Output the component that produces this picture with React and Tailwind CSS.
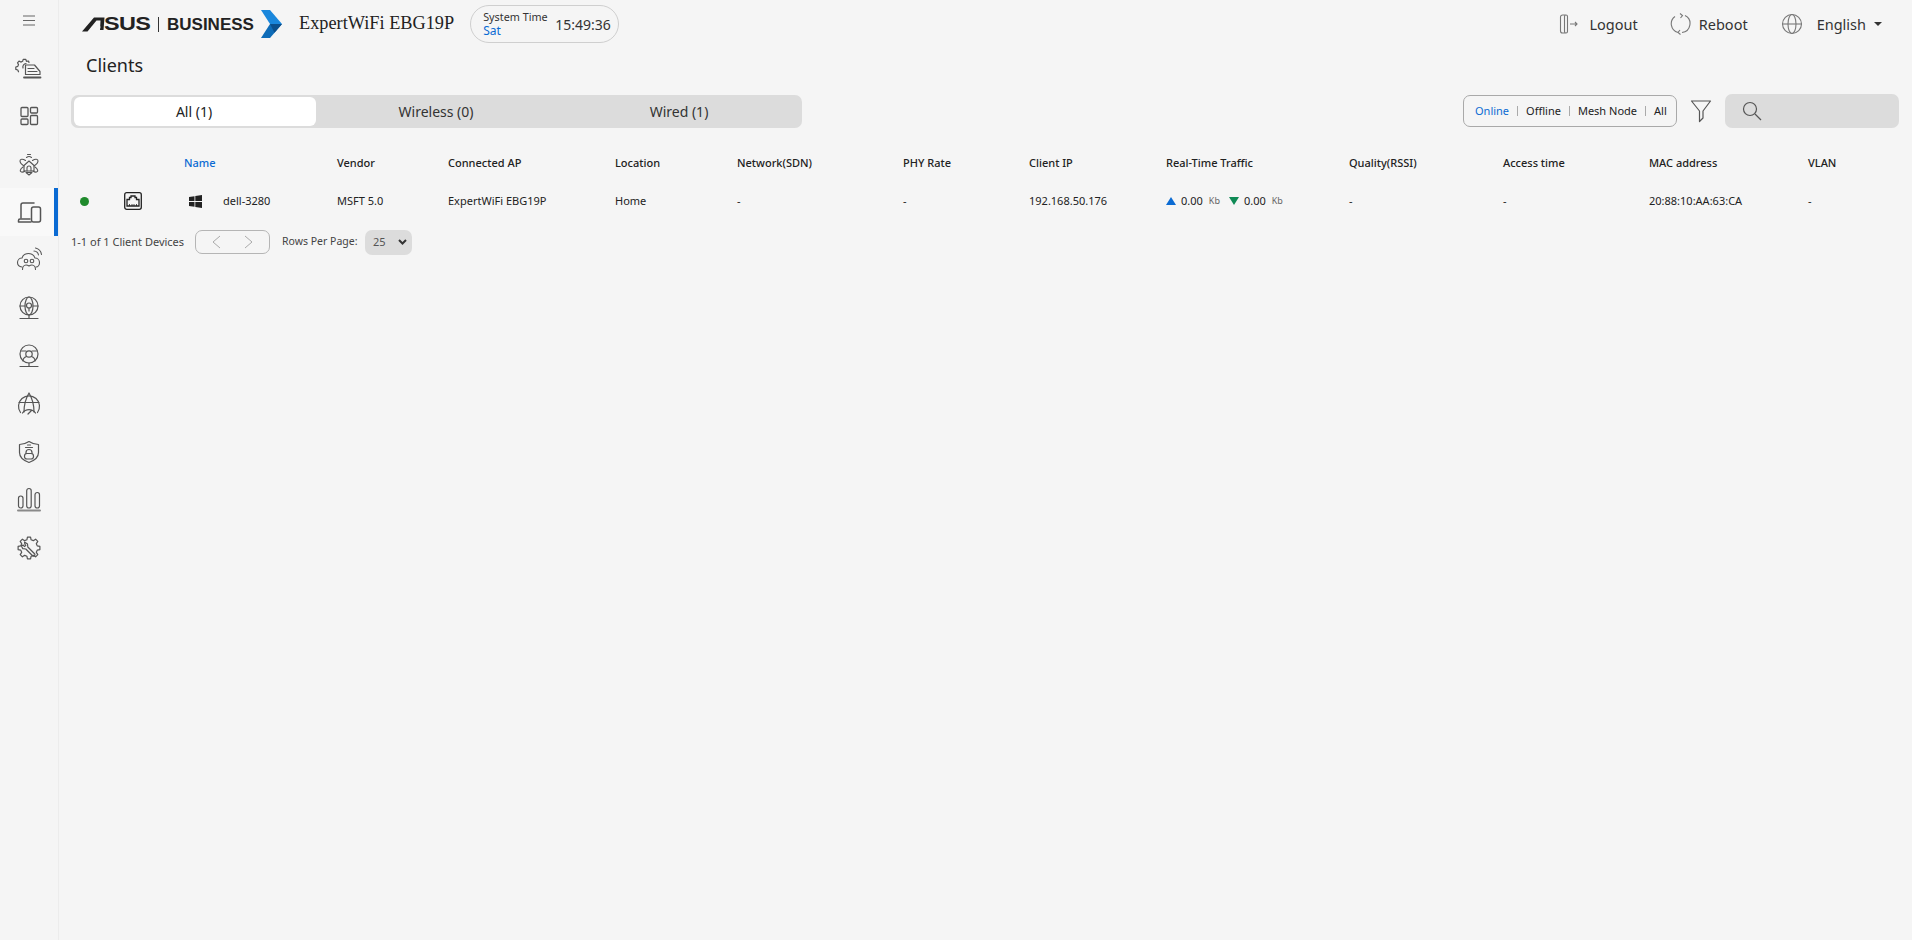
import React from 'react';

const font = { fontFamily: '"Noto Sans", sans-serif' };

const columns = [
  'Name', 'Vendor', 'Connected AP', 'Location', 'Network(SDN)', 'PHY Rate', 'Client IP',
  'Real-Time Traffic', 'Quality(RSSI)', 'Access time', 'MAC address', 'VLAN',
];

const gridCols = 'grid grid-cols-[21px_44px_60px_153px_111px_167px_122px_166px_126px_137px_183px_154px_146px_159px_1fr]';

function Icon({ children, w = 28, h = 28, box = '0 0 28 28', sw = 1.2 }) {
  return (
    <svg width={w} height={h} viewBox={box} fill="none" stroke="#555" strokeWidth={sw} strokeLinecap="round" strokeLinejoin="round">
      {children}
    </svg>
  );
}

// outline of a toothed gear, used by the settings icon
function gearPath(cx, cy, outer, inner, teeth) {
  const pts = [];
  const step = (Math.PI * 2) / teeth;
  for (let i = 0; i < teeth; i++) {
    const a = i * step;
    [[-0.32, inner], [-0.18, outer], [0.18, outer], [0.32, inner]].forEach(([f, r]) => {
      pts.push(`${(cx + r * Math.cos(a + f * step)).toFixed(2)} ${(cy + r * Math.sin(a + f * step)).toFixed(2)}`);
    });
  }
  return `M${pts.join('L')}Z`;
}

const navIcons = [
  <Icon key="a">
    <path d="M14 8.500l-.5-1.500-2 .3-.8-2h-2.500l-.6 2-1.800.8-1.800-1-1.500 1.700 1 1.800-.7 1.800-2 .6v2.400l2 .6.7 1.800" />
    <path d="M8 14a3.500 3.500 0 0 1 3-4.500" />
    <path d="M10.500 11h9l5.500 6.500v3H10.500z" />
    <path d="M13 14.500h6M13 17.500h9" />
    <path d="M9 23.500h16.500" strokeWidth="1.800" />
  </Icon>,
  <Icon key="b" sw={1.300}>
    <rect x="6" y="5.500" width="7" height="9" rx="1" />
    <rect x="15.500" y="5.500" width="7" height="5.500" rx="1" />
    <rect x="6" y="17" width="7" height="5.500" rx="1" />
    <rect x="15.500" y="13.500" width="7" height="9" rx="1" />
  </Icon>,
  <Icon key="c" sw={1.100}>
    <path d="M14 11l5 4.500V21H9v-5.500z" />
    <path d="M12 21v-3a2 2 0 0 1 4 0v3" />
    <path d="M10.500 10.500C7.500 8.500 5 9 5 11c0 2 2.500 4 4 5M17.500 10.500c3-2 5.500-1.500 5.500.5 0 2-2.500 4-4 5" />
    <path d="M8 17c-3 2-3.500 4.500-1.500 5 1 .3 2.500-.3 3.500-1M20 17c3 2 3.500 4.500 1.500 5-1 .3-2.500-.3-3.500-1M14 25l-3-2.500h6z" />
    <path d="M11.500 7.500a4 4 0 0 1 5 0M12.500 4.500h3" />
  </Icon>,
  <Icon key="d" sw={1.500}>
    <path d="M6 20V7a2 2 0 0 1 2-2h11" />
    <path d="M3.500 24h12.500M3.500 24v-1.500a1.500 1.500 0 0 1 1.500-1.500h10" />
    <rect x="16.500" y="9" width="9" height="15" rx="2" />
  </Icon>,
  <Icon key="e" sw={1.100}>
    <path d="M7 21c-3 0-4.500-2-4.500-4.500S4.500 12 7 12c1-3 3.500-4.500 6.500-4.500S19 9.500 20 12c2.500 0 4.500 2 4.500 4.500S23 21 21 21" />
    <circle cx="11" cy="15" r="1.800" /><circle cx="17" cy="15" r="1.800" />
    <path d="M7.500 23.500c0-2.500 1.500-4.500 3.500-4.500 1.500 0 3 1 3 1s1.500-1 3-1c2 0 3.500 2 3.500 4.500" />
    <path d="M19 5a5 5 0 0 1 4.500 4M20.500 2a8 8 0 0 1 6 6.500" />
  </Icon>,
  <Icon key="f">
    <circle cx="14" cy="12" r="9" /><ellipse cx="14" cy="12" rx="4" ry="9" />
    <path d="M5 12h5M18 12h5M14 21v3M5 24.500h18" />
    <circle cx="14" cy="11.500" r="2.500" fill="#f5f5f5" /><path d="M14 14v3" />
  </Icon>,
  <Icon key="g">
    <circle cx="14" cy="12" r="9" /><circle cx="14" cy="12" r="3.200" />
    <path d="M6 9h5M17 9h5M8 19c0-3 2-4 3.500-4.500M20 19c0-3-2-4-3.500-4.500M14 21v3M5 24.500h18" />
  </Icon>,
  <Icon key="h">
    <path d="M5.500 22.500a10.500 10.500 0 1 1 17 0" /><path d="M9 22C9 14 11 8 14 3c3 5 5 11 5 19" />
    <path d="M4 12.500h20M7.500 23a8 8 0 0 1 13 0M13 24l3.500-3.500" />
  </Icon>,
  <Icon key="i">
    <path d="M14 3.500c3 2 6 3 9.500 3v8c0 5-4 8-9.500 10-5.500-2-9.500-5-9.500-10v-8c3.500 0 6.500-1 9.500-3z" />
    <path d="M10.500 9.500h7M12.500 7h3" />
    <path d="M11 15.500v-1a3 3 0 0 1 6 0v1" />
    <rect x="9.500" y="15.500" width="9" height="5.500" rx="2.500" />
  </Icon>,
  <Icon key="j" w={30} h={30} box="0 0 30 30">
    <rect x="4.500" y="11" width="4.500" height="12" rx="2.200" />
    <rect x="12.700" y="3.500" width="4.500" height="19.500" rx="2.200" />
    <rect x="21" y="7.500" width="4.500" height="15.500" rx="2.200" />
    <path d="M4 25.500h22" strokeWidth="2" stroke="#8a8a8a" />
  </Icon>,
  <Icon key="k" sw={1.200}>
    <path d={gearPath(14, 14, 11, 8.500, 8)} />
    <path d="M9.500 8l3 2 .3 3 7 7a1.500 1.500 0 0 1-2 2l-7-7-3-.3-1.500-3 2-.5 1 1.300 1.500-1-1-1.500z" />
  </Icon>,
];

function Sidebar() {
  return (
    <aside className="w-[59px] shrink-0 border-r border-[#ececec] flex flex-col">
      <div className="h-[44px] flex justify-center pr-[1px] pt-[15px]">
        <svg width="12" height="11" viewBox="0 0 12 11" stroke="#666" strokeWidth="1.200">
          <path d="M0 1h12M0 5.500h12M0 10h12" />
        </svg>
      </div>
      <div className="flex flex-col">
        {navIcons.map((icon, i) => (
          <div
            key={i}
            className={`h-[48px] flex items-center justify-center ${i === 3 ? 'bg-[#f9f9f9] border-r-4 border-[#0b6bd3] pl-[4px]' : 'pr-[1px]'}`}
          >
            {icon}
          </div>
        ))}
      </div>
    </aside>
  );
}

function Logo() {
  return (
    <div className="flex items-center">
      <svg width="23" height="15" viewBox="0 0 23 15" fill="#222">
        <path d="M0 14.500L12 .5h10.500l-1 12.500H18l.5-9.500h-4L5.500 14.500z" />
        <path d="M10 9.500h8.500l-.3 2H8.500z" fill="#f5f5f5" />
      </svg>
      <span className="w-[47px] -ml-[1px] text-[18px] font-bold leading-none text-[#222] scale-x-[1.3] origin-left tracking-[-0.5px]" style={{ fontFamily: '"Liberation Sans", sans-serif' }}>SUS</span>
    </div>
  );
}

function Header() {
  return (
    <header className="h-[48px] flex items-center pl-[23px] pr-[30px]">
      <Logo />
      <span className="w-px h-[15px] bg-[#333] ml-[7px] mr-[8px]"></span>
      <span className="text-[17px] font-bold text-[#222] w-[87px] leading-none whitespace-nowrap" style={{ fontFamily: '"Liberation Sans", sans-serif' }}>BUSINESS</span>
      <svg className="ml-[7px]" width="21" height="28" viewBox="0 0 21 28">
        <path d="M0 0h9l12 14H9z" fill="#1a87dc" />
        <path d="M0 28h9l12-14H9z" fill="#0e6cb8" />
        <path d="M9 14h12l-7.500 8.800z" fill="#0b4f8c" />
      </svg>
      <span className="ml-[17px] text-[18.300px] text-[#222] whitespace-nowrap" style={{ fontFamily: '"Liberation Serif", serif' }}>ExpertWiFi EBG19P</span>
      <div className="ml-[16px] h-[38px] w-[149px] rounded-full border border-[#cfcfcf] flex items-center pl-[12px]">
        <div className="flex flex-col leading-[14px] w-[65px]">
          <span className="text-[10.800px] text-[#333] whitespace-nowrap">System Time</span>
          <span className="text-[12px] text-[#0b6bd3]">Sat</span>
        </div>
        <span className="ml-[7px] text-[14px] text-[#333]">15:49:36</span>
      </div>
      <div className="ml-auto flex items-center text-[14.500px] text-[#333]">
        <svg width="22" height="22" viewBox="0 0 22 22" fill="none" stroke="#777" strokeWidth="1.100">
          <path d="M8 2H4.500A2 2 0 0 0 2.500 4v14a2 2 0 0 0 2 2H8M8 2a1.500 1.500 0 0 1 1.500 1.500v15A1.500 1.500 0 0 1 8 20a1.500 1.500 0 0 1-1.500-1.500v-15A1.500 1.500 0 0 1 8 2zM12 11h7M17 9l2 2-2 2" />
        </svg>
        <span className="ml-[9px] mt-[1px]">Logout</span>
        <svg className="ml-[31px]" width="22" height="24" viewBox="0 0 22 24" fill="none" stroke="#777" strokeWidth="1.100">
          <path d="M6 4.500a9 9 0 0 0 3 16M16 3.500a9 9 0 0 1-3 17M11 1.500l2.500 2-2 2.500M11 18l-2 2.500 2.500 2" />
        </svg>
        <span className="ml-[8px] mt-[1px]">Reboot</span>
        <svg className="ml-[33px]" width="22" height="22" viewBox="0 0 22 22" fill="none" stroke="#777" strokeWidth="1.100">
          <circle cx="11" cy="11" r="9.500" /><ellipse cx="11" cy="11" rx="4" ry="9.500" /><path d="M1.500 11h19" />
        </svg>
        <span className="ml-[14px] mt-[1px]">English</span>
        <span className="ml-[8px] w-0 h-0 border-x-[4px] border-x-transparent border-t-[4px] border-t-[#333]"></span>
      </div>
    </header>
  );
}

function Toolbar() {
  return (
    <div className="flex items-center pl-[12px] pr-[13px] mt-[17px]">
      <div className="w-[731px] h-[33px] bg-[#dcdcdc] rounded-[7px] flex items-center text-[14px] text-[#333] p-[2px]">
        <div className="w-[243px] h-[29px] bg-white rounded-[6px] flex items-center justify-center ml-[1px] pr-[2px] text-[#222]">All (1)</div>
        <div className="w-[243px] text-center pr-[2px]">Wireless (0)</div>
        <div className="w-[243px] text-center">Wired (1)</div>
      </div>
      <div className="ml-auto w-[214px] h-[32px] rounded-[7px] border border-[#a9a9a9] flex items-center pl-[11px] text-[11px] text-[#222]">
        <span className="text-[#0b6bd3]">Online</span>
        <span className="w-px h-[10px] bg-[#aaa] mx-[8px]"></span>
        <span>Offline</span>
        <span className="w-px h-[10px] bg-[#aaa] mx-[8px]"></span>
        <span>Mesh Node</span>
        <span className="w-px h-[10px] bg-[#aaa] mx-[8px]"></span>
        <span>All</span>
      </div>
      <svg className="ml-[13px]" width="22" height="24" viewBox="0 0 22 24" fill="none" stroke="#555" strokeWidth="1.200" strokeLinejoin="round">
        <path d="M1.500 2h19L13 12v7l-3.500 3.500V12z" />
      </svg>
      <div className="ml-[13px] w-[174px] h-[34px] rounded-[7px] bg-[#dcdcdc] flex items-center pl-[17px]">
        <svg width="20" height="20" viewBox="0 0 20 20" fill="none" stroke="#555" strokeWidth="1.200">
          <circle cx="8" cy="8" r="6.500" /><path d="M13 13l6 6" />
        </svg>
      </div>
    </div>
  );
}

function ClientTable() {
  return (
    <div className="text-[11px] text-[#222]">
      <div className={`${gridCols} h-[38px] mt-[16px] items-center font-medium`}>
        <span></span><span></span><span></span>
        {columns.map((c, i) => (
          <span key={c} className={`whitespace-nowrap ${i === 0 ? 'text-[#0b6bd3]' : ''}`}>{c}</span>
        ))}
      </div>
      <div className={`${gridCols} h-[38px] items-center whitespace-nowrap`}>
        <span></span>
        <span className="w-[9px] h-[9px] rounded-full bg-[#1f8a2c]"></span>
        <span>
          <svg width="18" height="18" viewBox="0 0 18 18" fill="none" stroke="#222" strokeWidth="1.300">
            <rect x="0.700" y="0.700" width="16.600" height="16.600" rx="2" />
            <path d="M3 14V7.500h2.500V5.500h1.500V4h4v1.500h1.500v2H15V14z" />
            <path d="M5.500 14v-2M8 14v-2M10 14v-2M12.500 14v-2" strokeWidth="0.800" />
          </svg>
        </span>
        <span className="flex items-center">
          <svg className="ml-[5px]" width="13" height="13" viewBox="0 0 13 13" fill="#222">
            <path d="M0 2l5.500-.8v4.800H0zM6.300 1.100L13 0v6H6.300zM0 6.900h5.500v4.900L0 11zM6.300 6.900H13V13l-6.700-1z" />
          </svg>
          <span className="ml-[21px]">dell-3280</span>
        </span>
        <span>MSFT 5.0</span>
        <span>ExpertWiFi EBG19P</span>
        <span>Home</span>
        <span>-</span>
        <span>-</span>
        <span>192.168.50.176</span>
        <span className="flex items-center">
          <span className="w-0 h-0 border-x-[5px] border-x-transparent border-b-[8px] border-b-[#0b6bd3]"></span>
          <span className="ml-[5px]">0.00</span>
          <span className="ml-[6px] text-[9px] text-[#666]">Kb</span>
          <span className="ml-[9px] w-0 h-0 border-x-[5px] border-x-transparent border-t-[8px] border-t-[#0f8a55]"></span>
          <span className="ml-[5px]">0.00</span>
          <span className="ml-[6px] text-[9px] text-[#666]">Kb</span>
        </span>
        <span>-</span>
        <span>-</span>
        <span>20:88:10:AA:63:CA</span>
        <span>-</span>
      </div>
      <div className="flex items-center h-[28px] mt-[8px] pl-[12px] text-[#444]">
        <span className="w-[124px] whitespace-nowrap">1-1 of 1 Client Devices</span>
        <div className="w-[75px] h-[24px] rounded-[7px] border border-[#b5b5b5] flex items-center justify-between px-[16px]">
          <svg width="9" height="14" viewBox="0 0 9 14" fill="none" stroke="#aaa"><path d="M8 1L1 7l7 6" /></svg>
          <svg width="9" height="14" viewBox="0 0 9 14" fill="none" stroke="#aaa"><path d="M1 1l7 6-7 6" /></svg>
        </div>
        <span className="ml-[12px] w-[83px] whitespace-nowrap text-[10.500px]">Rows Per Page:</span>
        <div className="w-[47px] h-[25px] rounded-[7px] bg-[#dcdcdc] flex items-center pl-[8px] text-[#555]">
          <span>25</span>
          <svg className="ml-[12px]" width="9" height="6" viewBox="0 0 9 6" fill="none" stroke="#333" strokeWidth="2"><path d="M1 1l3.500 3.500L8 1" /></svg>
        </div>
      </div>
    </div>
  );
}

export default function App() {
  return (
    <div className="w-full h-[940px] flex bg-[#f5f5f5] overflow-hidden" style={font}>
      <Sidebar />
      <main className="flex-1 min-w-0">
        <Header />
        <h1 className="pl-[27px] text-[18px] leading-[24px] mt-[5px] text-[#222]">Clients</h1>
        <Toolbar />
        <ClientTable />
      </main>
    </div>
  );
}
